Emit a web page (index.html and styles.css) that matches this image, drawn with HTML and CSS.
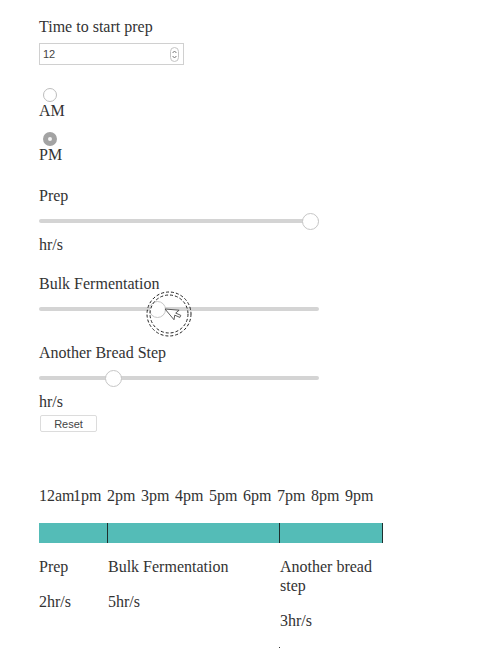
FILE: index.html
```html
<!DOCTYPE html>
<html>
<head>
  <title>Bread Schedule</title>
  <link rel="stylesheet" href="styles.css">
</head>
<body>
  <div class="container">
    <div class="label">Time to start prep</div>
    <div class="num">
      <input class="num-input" type="text" value="12">
      <svg class="spin" width="9" height="15" viewBox="0 0 9 15">
        <rect x="0.5" y="0.5" width="8" height="14" rx="4" fill="#fff" stroke="#c4c4c4"/>
        <path d="M2.6 6 L4.5 4 L6.4 6 M2.6 9 L4.5 11 L6.4 9" fill="none" stroke="#777" stroke-width="1"/>
      </svg>
    </div>

    <div class="choice choice-first">
      <input class="radio" type="radio" name="ampm" id="am">
      <label for="am">AM</label>
    </div>
    <div class="choice">
      <input class="radio" type="radio" name="ampm" id="pm" checked>
      <label for="pm">PM</label>
    </div>

    <div class="step step-first">
      <div class="label">Prep</div>
      <input class="slider" type="range" min="0" max="100" value="100">
      <div class="unit">hr/s</div>
    </div>

    <div class="step">
      <div class="label">Bulk Fermentation</div>
      <div class="slider-wrap">
        <input class="slider" type="range" min="0" max="100" value="42">
        <!-- screen recorder click marker -->
        <svg class="click-mark" width="50" height="50" viewBox="0 0 50 50">
          <circle cx="25" cy="25" r="22" fill="none" stroke="#222" stroke-width="1" stroke-dasharray="3 2"/>
          <circle cx="25" cy="25" r="19" fill="none" stroke="#222" stroke-width="1" stroke-dasharray="3 2"/>
          <path d="M21 20 L21 34 L24.5 31 L27 36 L29 35 L26.6 30 L31 30 Z" fill="#fff" stroke="#444" stroke-width="0.8" transform="rotate(-40 21 20)"/>
        </svg>
      </div>
    </div>

    <div class="step step-another">
      <div class="label">Another Bread Step</div>
      <input class="slider" type="range" min="0" max="100" value="25">
      <div class="unit">hr/s</div>
      <button class="reset">Reset</button>
    </div>

    <div class="hours">
      <span>12am</span><span>1pm</span><span>2pm</span><span>3pm</span><span>4pm</span><span>5pm</span><span>6pm</span><span>7pm</span><span>8pm</span><span>9pm</span>
    </div>

    <div class="timeline">
      <div class="segment" style="width: 69px;">
        <div class="bar"></div>
        <p>Prep</p>
        <p>2hr/s</p>
      </div>
      <div class="segment" style="width: 172px;">
        <div class="bar"></div>
        <p>Bulk Fermentation</p>
        <p>5hr/s</p>
      </div>
      <div class="segment" style="width: 103px;">
        <div class="bar"></div>
        <p>Another bread step</p>
        <p>3hr/s</p>
        <div class="dot"></div>
      </div>
    </div>
  </div>
</body>
</html>
```

FILE: styles.css
```css
* {
  box-sizing: border-box;
}

body {
  margin: 0;
  font-family: "Liberation Serif", "Times New Roman", serif;
  font-size: 16px;
  color: #333;
  background: #fff;
}

.container {
  padding: 18px 39px 0;
}

.label,
.unit {
  line-height: 18px;
}

/* number field */
.num {
  display: flex;
  align-items: center;
  width: 145px;
  height: 22px;
  margin-top: 7px;
  border: 1px solid #d0d0d0;
  padding: 0 4px 0 3px;
}

.num-input {
  flex: 1;
  min-width: 0;
  border: none;
  outline: none;
  padding: 0;
  font-family: "Liberation Sans", Arial, sans-serif;
  font-size: 11px;
  color: #444;
  background: transparent;
}

.spin {
  display: block;
}

/* am / pm */
.choice {
  margin-top: 12px;
}

.choice-first {
  margin-top: 23px;
}

.choice label {
  display: block;
  line-height: 18px;
}

.radio {
  -webkit-appearance: none;
  appearance: none;
  display: block;
  width: 14px;
  height: 14px;
  margin: 0 0 0 4px;
  border: 1px solid #bdbdbd;
  border-radius: 50%;
  background: #fff;
}

.radio:checked {
  border: 5px solid #a3a3a3;
  background: #f4f4f4;
}

/* sliders */
.step {
  margin-top: 21px;
}

.step-first {
  margin-top: 23px;
}

.step-another {
  margin-top: 27px;
}

.slider-wrap {
  position: relative;
  width: 280px;
}

.slider {
  -webkit-appearance: none;
  appearance: none;
  display: block;
  width: 280px;
  height: 16px;
  margin: 8px 0 0;
  background: transparent;
}

.slider::-webkit-slider-runnable-track {
  height: 4px;
  background: #d4d4d4;
  border-radius: 2px;
}

.slider::-webkit-slider-thumb {
  -webkit-appearance: none;
  width: 17px;
  height: 17px;
  margin-top: -6.5px;
  border-radius: 50%;
  border: 1px solid #c6c6c6;
  background: #fff;
}

.unit {
  margin-top: 7px;
}

.click-mark {
  position: absolute;
  left: 105px;
  top: -12px;
}

.reset {
  display: block;
  width: 57px;
  height: 17px;
  margin: 4px 0 0 1px;
  padding: 0;
  border: 1px solid #dcdcdc;
  border-radius: 2px;
  background: #fff;
  font-family: "Liberation Sans", Arial, sans-serif;
  font-size: 11px;
  color: #444;
}

/* timeline */
.hours {
  margin-top: 55px;
  white-space: nowrap;
  line-height: 18px;
}

.hours span {
  display: inline-block;
  width: 34px;
}

.timeline {
  display: flex;
  margin-top: 18px;
}

.segment .bar {
  height: 20px;
  background: #54bcb7;
  border-right: 1px solid #1f2f2e;
}

.segment p {
  margin: 14px 0 0;
  line-height: 19px;
}

.segment p + p {
  margin-top: 16px;
}

.dot {
  width: 1px;
  height: 1px;
  margin: 17px 0 0 -1px;
  background: #333;
}
```
